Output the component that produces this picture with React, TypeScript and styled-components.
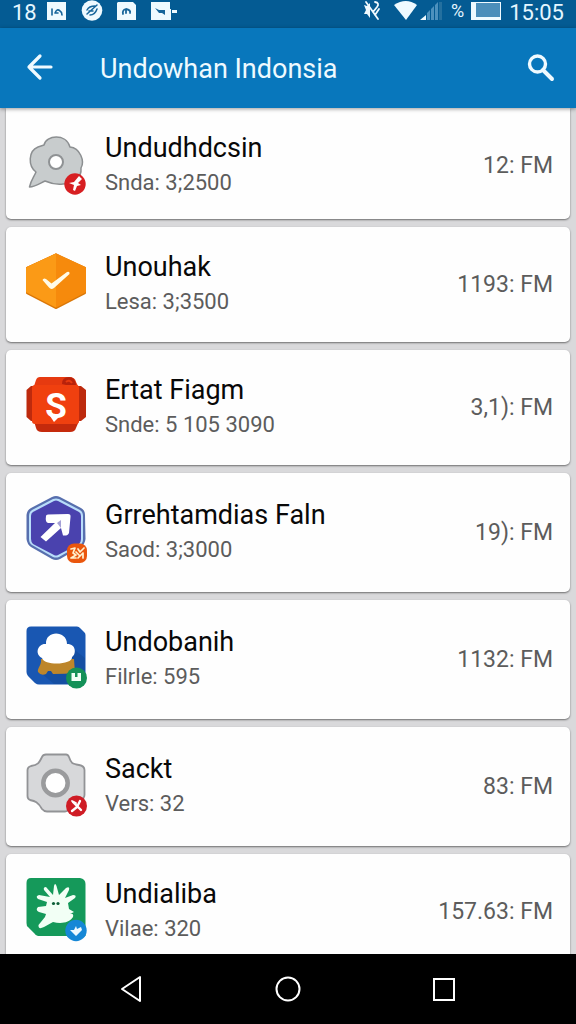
import React from 'react';
import styled, { createGlobalStyle } from 'styled-components';

const GlobalStyle = createGlobalStyle`
  *, *::before, *::after { box-sizing: border-box; }
  body { margin: 0; background: #000; font-family: Roboto, "Liberation Sans", sans-serif; }
  button { border: 0; padding: 0; background: none; color: inherit; font: inherit; cursor: pointer; }
`;

const Screen = styled.div`
  display: flex;
  flex-direction: column;
  height: 100vh;
  background: #d9d9db;
`;

const StatusBar = styled.div`
  display: flex;
  flex: none;
  justify-content: space-between;
  height: 28px;
  padding: 0 12px 6px;
  background: #045b93;
  color: #e4f6ff;
  font-size: 22px;
  line-height: 22px;
`;

const StatusGroup = styled.div<{ $gap: number }>`
  display: flex;
  align-items: center;
  gap: ${(p) => p.$gap}px;
`;

const Clock = styled.span`
  line-height: 26px;
  padding-top: 4px;
`;

const Percent = styled.span`
  font-size: 18px;
  line-height: 20px;
`;

const AppBar = styled.header`
  position: relative;
  z-index: 1;
  display: flex;
  flex: none;
  align-items: center;
  height: 80px;
  padding: 0 19px 0 24px;
  background: #0877bc;
  box-shadow: 0 1px 4px rgba(0, 0, 0, 0.4);
  color: #eefaff;
`;

const PageTitle = styled.h1`
  flex: 1;
  margin: 0;
  padding: 2px 0 0 44px;
  font-size: 27px;
  font-weight: 400;
  line-height: 36px;
`;

const IconButton = styled.button`
  display: flex;
  align-items: center;
  justify-content: center;
  width: 32px;
  height: 48px;
`;

const List = styled.ul`
  display: flex;
  flex: 1;
  flex-direction: column;
  gap: 8px;
  min-height: 0;
  margin: 0;
  padding: 0 6px;
  overflow: hidden;
  list-style: none;
`;

const Card = styled.li<{ $height: number }>`
  display: flex;
  flex: none;
  align-items: center;
  gap: 16px;
  height: ${(p) => p.$height}px;
  padding: 0 17px 0 18px;
  border-radius: 5px;
  background: #fefefe;
  box-shadow: 0 1px 2px rgba(0, 0, 0, 0.5);

  &:first-child {
    padding-top: 4px;
    border-top-left-radius: 0;
    border-top-right-radius: 0;
  }
`;

const AppIcon = styled.svg`
  flex: none;
  width: 64px;
  height: 72px;
  overflow: visible;
`;

const Info = styled.div`
  flex: 1;
  min-width: 0;
  padding-left: 1px;
`;

const Name = styled.h2`
  margin: 0;
  color: #080808;
  font-size: 27px;
  font-weight: 400;
  line-height: 34px;
`;

const Detail = styled.p`
  margin: 0;
  color: #5c5c5c;
  font-size: 22px;
  line-height: 36px;
`;

const Time = styled.span`
  color: #5c5c5c;
  font-size: 23px;
  line-height: 34px;
`;

const NavBar = styled.nav`
  display: flex;
  flex: none;
  justify-content: center;
  height: 70px;
  background: #000;
`;

const NavButton = styled.button`
  display: flex;
  flex: 0 0 27%;
  align-items: center;
  justify-content: center;
`;

const Line = ({ d, w, color = '#fff' }: { d: string; w: number; color?: string }) => (
  <path d={d} fill="none" stroke={color} strokeWidth={w} strokeLinecap="round" strokeLinejoin="round" />
);

const CloudIcon = () => (
  <AppIcon viewBox="0 0 64 72" aria-hidden="true">
    <path
      d="M5.5 57 C7 50 10 47 12 42 C4 36 4 21 14 17 Q17 16 20 15 C22 5 42 3 46 17 C56 18 61 31 57 38 C58 48 49 54 39 54 Q30 55 21 51 C15 54 11 57 5.5 57Z"
      fill="#c8cccd" stroke="#8c8f91" strokeWidth="1.5" strokeLinejoin="round"
    />
    <circle cx="32" cy="32" r="7" fill="#fff" stroke="#8f9294" strokeWidth="2" />
    <circle cx="51" cy="54" r="10.7" fill="#d71f22" />
    <path d="M45 53 L50 52 L55 46 L58 49 L54 53 L57 55 L53 56 L51 61 L49 60 L50 55Z" fill="#fff" />
  </AppIcon>
);

const HexCheckIcon = () => (
  <AppIcon viewBox="0 0 64 72" aria-hidden="true">
    <path d="M32 5.5 L61 19 V44 L32 59 L3 44 V19Z" fill="#d97708" stroke="#d97708" strokeWidth="2" strokeLinejoin="round" />
    <path d="M32 5.5 L61 19 V42.5 L32 57.5 L3 42.5 V19Z" fill="#f68a0c" stroke="#f68a0c" strokeWidth="2" strokeLinejoin="round" />
    <path d="M32 4.5 L3 18 Q2 19 2 20 V42.5 Q2 43.5 3 43.5 L32 58.5Z" fill="#fb9a16" />
    <path d="M18.500 31 Q19.500 28.500 22 30 L27.500 34.500 L43 23 Q46 22 45.500 25 L30 39 Q27 41 25 38.500Z" fill="#fffbe8" />
  </AppIcon>
);

const RedMoneyIcon = () => (
  <AppIcon viewBox="0 0 64 72" aria-hidden="true">
    <path d="M7 14 H57 L62 18 V45 L57 49 H7 L2.500 45 V18Z" fill="#bd2a0d" />
    <path d="M16 5 H45 Q51 5 52 10 L54 14 H10 L12 8Q13 5 16 5Z" fill="#e63a10" />
    <path d="M38 12 Q38 5 45 5 Q51 5 52 13 L46 14Z" fill="#b8220b" />
    <path d="M42 10 Q45 7 48 11" fill="none" stroke="#e63a10" strokeWidth="2" />
    <path d="M10 49 H55 L52 56 Q51 60 46 60 H18 Q13 60 12 56Z" fill="#c52a0c" />
    <rect x="8" y="13" width="47" height="39" rx="3" fill="#f0400f" />
    <path d="M26 44 H36 L30 50Z" fill="#fff" />
    <text x="32" y="46" fill="#fff" fontFamily="Roboto, sans-serif" fontSize="35" fontWeight="700" textAnchor="middle">S</text>
  </AppIcon>
);

const ArrowShieldIcon = () => (
  <AppIcon viewBox="0 0 64 72" aria-hidden="true">
    <path d="M28 0 Q32 -2 36 0 L57 11 Q61 13 61 18 L61.500 42 Q61 47 57 50 L36 62 Q32 64 28 62 L7 50 Q3 47 2.500 42 V18 Q3 13 7 11Z" fill="#576fae" />
    <path d="M29 2 Q32 1 35 2 L56 13 Q59 15 59 19 V42 Q59 46 56 48 L35 60 Q32 61 29 60 L8 48 Q5 46 5 42 V19 Q5 15 8 13Z" fill="#b9ddfa" />
    <path d="M30 4 Q32 3 34 4 L55 15 Q57 16 57 19 V42 Q57 45 55 47 L34 58 Q32 59 30 58 L9 47 Q7 45 7 42 V19 Q7 16 9 15Z" fill="#4a42ae" />
    <path d="M22 19 Q22 17.500 24 17.500 L44 17 Q47 17 46.500 20 L45 36 Q44 39 39 38.500 L37 31 L22 44.500 L16.500 40 L31 26 H24 Q21 25 22 19Z" fill="#fff" />
    <path d="M37 23 L33 26 L37 31Z" fill="#4a42ae" opacity="0.5" />
    <rect x="43" y="46.500" width="20" height="19.500" rx="7" fill="#ea560d" />
    <Line d="M47 52 L51 51 L49 56 L52 58 L47 61 H52 M54 52 L56 55 L60 51 M54 61 L59 56 V61 M52 55 L55 58" w={1.7} color="#fff1cf" />
  </AppIcon>
);

const CloudTileIcon = () => (
  <AppIcon viewBox="0 0 64 72" aria-hidden="true">
    <path d="M7 2.500 H53 Q55 2.500 56 4 L60 8 Q61.500 9 61.500 11 V58 Q61.500 60.500 59 60.500 H15 Q13 60.500 11 59 L4 52 Q2.500 50 2.500 48 V7Q2.500 2.500 7 2.500Z" fill="#1957b2" />
    <path d="M22 20 C21 6 43 6 43 20 L61 34 V58 Q61 60 59 60 H30 L18 50Z" fill="#124793" opacity="0.5" />
    <path d="M17 35 C18 41 13 44 14 48 Q17 52 22 50 L24 47 H27 L29 50 Q41 50 51 49 L50 35Z" fill="#bd862b" />
    <path d="M22 20 C21 6 43 6 43 20 C53 20 52 31 48 33 C49 41 20 42 18 34 C10 30 14 19 22 20Z" fill="#fff" />
    <circle cx="52.500" cy="54" r="10.500" fill="#149158" />
    <path d="M47.500 49 H51 V53 H53.500 V49 H57 V57 H47.500Z" fill="#f1fff7" />
  </AppIcon>
);

const GearIcon = () => (
  <AppIcon viewBox="0 0 64 72" aria-hidden="true">
    <path
      d="M22 3.500 H42 Q44 3.500 45 6 C47 12 48 13 55 14 Q60.500 15 60.500 19 V44 Q60.500 48 55 49 C48 50 48 52 45 58 Q44 60.500 41 60.500 H23 Q20 60.500 18 58 C14 51 11 50 6 49 Q3.500 48 3.500 45 V19 Q3.500 16 7 15 C14 14 15 12 18 6 Q19 3.500 22 3.500Z"
      fill="#d7d8da" stroke="#929396" strokeWidth="1.800"
    />
    <circle cx="31.500" cy="32" r="12.200" fill="#fff" stroke="#9a9b9d" strokeWidth="4.500" />
    <circle cx="52.500" cy="55" r="10.500" fill="#cf1c25" />
    <Line d="M49 51 L57 59 M56 50 L53 56 L48 60" w={2.4} />
    <Line d="M48 50 L52 52" w={1.8} />
  </AppIcon>
);

const SplatIcon = () => (
  <AppIcon viewBox="0 0 64 72" aria-hidden="true">
    <path d="M7 2 H56 Q61.500 3 61.500 8 V60 H14 Q12 60 10 57 L4 51 Q2.500 50 2.500 47 V7Q2.500 2 7 2Z" fill="#15995a" />
    <path
      d="M26 21 L20 14 Q19 11 22 11 L29 19 L30 10 Q31 6 32.500 10 L35 19 L42 12 Q46 10 45 14 L41 22 L49 19 Q53 19 51 22 L44 27 L45 33 L50 36 L46 38 Q50 37 49 41 C45 47 37 48 29 46 L20 51 Q14 54 14.500 49 L21 41 L22 38 L15 36 Q11 34 14 31 L22 30 L23 26 L14 23 Q11 20 15 19Z"
      fill="#f2fff5"
    />
    <circle cx="29.500" cy="27.500" r="1.600" fill="#0c5e37" />
    <circle cx="34" cy="27.500" r="1.600" fill="#0c5e37" />
    <circle cx="52" cy="54.500" r="10.700" fill="#1687d6" />
    <path d="M46 54 L50 54 L52 50 L53 53 L57 51 L58 54 L52 60Z" fill="#eff9ff" />
  </AppIcon>
);

interface Entry {
  name: string;
  detail: string;
  time: string;
  height: number;
  Icon: () => React.JSX.Element;
}

const entries: Entry[] = [
  { name: 'Undudhdcsin', detail: 'Snda: 3;2500', time: '12: FM', height: 111, Icon: CloudIcon },
  { name: 'Unouhak', detail: 'Lesa: 3;3500', time: '1193: FM', height: 115, Icon: HexCheckIcon },
  { name: 'Ertat Fiagm', detail: 'Snde: 5 105 3090', time: '3,1): FM', height: 115, Icon: RedMoneyIcon },
  { name: 'Grrehtamdias Faln', detail: 'Saod: 3;3000', time: '19): FM', height: 119, Icon: ArrowShieldIcon },
  { name: 'Undobanih', detail: 'Filrle: 595', time: '1132: FM', height: 119, Icon: CloudTileIcon },
  { name: 'Sackt', detail: 'Vers: 32', time: '83: FM', height: 119, Icon: GearIcon },
  { name: 'Undialiba', detail: 'Vilae: 320', time: '157.63: FM', height: 115, Icon: SplatIcon },
];

const StatusIcons = () => (
  <>
    <svg width="20" height="20" viewBox="0 0 20 20" aria-hidden="true">
      <path d="M0 1 H19 V19 H0Z" fill="#effaff" />
      <Line d="M5 8 V14 M8 12 Q10 7 13 10 Q15 11 15 14 M8 12 H11" w={1.6} color="#17659a" />
    </svg>
    <svg width="22" height="22" viewBox="0 0 22 22" aria-hidden="true">
      <circle cx="11" cy="10.500" r="10.300" fill="#effaff" />
      <Line d="M6 10 Q8 6 14 6 M6 14 L16 5 M8 11 H12 M9 15 Q14 15 16 9" w={1.5} color="#17659a" />
    </svg>
    <svg width="20" height="20" viewBox="0 0 20 20" aria-hidden="true">
      <path d="M1 1 H16 L19 4 V19 H0 V2Z" fill="#effaff" />
      <Line d="M6 13 Q5 9 9 8 Q14 9 13 12 M9 9 V12" w={1.8} color="#17659a" />
    </svg>
    <svg width="27" height="20" viewBox="0 0 27 20" aria-hidden="true">
      <path d="M0 1 H19 V8 H20 V19 H0Z M21 9 H26 V12 H21Z" fill="#effaff" />
      <path d="M4 7 L8 9 L14 9 V14 L11 12 L8 12Z" fill="#17659a" />
    </svg>
  </>
);

export default function App() {
  return (
    <Screen>
      <GlobalStyle />
      <StatusBar>
        <StatusGroup $gap={10}>
          <Clock>18</Clock>
          <StatusGroup $gap={14}>
            <StatusIcons />
          </StatusGroup>
        </StatusGroup>
        <StatusGroup $gap={7}>
          <svg width="24" height="22" viewBox="0 0 24 22" aria-hidden="true">
            <path d="M1 5 L4 6 L7 3 V18 L4 14 L1 14 L3 10Z" fill="#effaff" />
            <Line d="M3 2 L15 19 M12 2 Q17 3 14 7 L10 12 M16 9 L12 15" w={1.8} color="#effaff" />
          </svg>
          <svg width="50" height="20" viewBox="0 0 50 20" aria-hidden="true">
            <path d="M0 4 Q12 -4 23 4 L12 19Z" fill="#effaff" />
            <path d="M26 19 L32 14 V19Z" fill="#effaff" />
            <path d="M33 12 L36 9 V19 H33Z M37 8 L40 5 V19 H37Z M41 4 L44 1 V19 H41Z" fill="#4d91bd" />
            <path d="M45 1 H48 V19 H45Z" fill="#24709f" />
          </svg>
          <Percent>%</Percent>
          <svg width="31" height="20" viewBox="0 0 31 20" aria-hidden="true">
            <path d="M0 1 H30 V19 H0Z" fill="#effaff" />
            <path d="M5 2 H29 V16 H5Z" fill="#4b8eba" />
          </svg>
          <Clock>15:05</Clock>
        </StatusGroup>
      </StatusBar>

      <AppBar>
        <IconButton aria-label="Back">
          <svg width="30" height="30" viewBox="0 0 30 30" aria-hidden="true">
            <Line d="M15 3 L4 14 L15 25 M4 14 H26" w={3.2} color="#effaff" />
          </svg>
        </IconButton>
        <PageTitle>Undowhan Indonsia</PageTitle>
        <IconButton aria-label="Search">
          <svg width="30" height="30" viewBox="0 0 30 30" aria-hidden="true">
            <circle cx="11.500" cy="11" r="8" fill="none" stroke="#effaff" strokeWidth="3.400" />
            <path d="M17 17 L26 26" stroke="#effaff" strokeWidth="4" strokeLinecap="round" />
          </svg>
        </IconButton>
      </AppBar>

      <List>
        {entries.map(({ name, detail, time, height, Icon }) => (
          <Card key={name} $height={height}>
            <Icon />
            <Info>
              <Name>{name}</Name>
              <Detail>{detail}</Detail>
            </Info>
            <Time>{time}</Time>
          </Card>
        ))}
      </List>

      <NavBar>
        <NavButton aria-label="Back">
          <svg width="28" height="30" viewBox="0 0 28 30" aria-hidden="true">
            <Line d="M22 3 V27 L4 15Z" w={2} />
          </svg>
        </NavButton>
        <NavButton aria-label="Home">
          <svg width="30" height="30" viewBox="0 0 30 30" aria-hidden="true">
            <circle cx="15" cy="15" r="11.500" fill="none" stroke="#fff" strokeWidth="2" />
          </svg>
        </NavButton>
        <NavButton aria-label="Recent apps">
          <svg width="30" height="30" viewBox="0 0 30 30" aria-hidden="true">
            <rect x="5" y="5" width="20" height="21" fill="none" stroke="#fff" strokeWidth="2" />
          </svg>
        </NavButton>
      </NavBar>
    </Screen>
  );
}
